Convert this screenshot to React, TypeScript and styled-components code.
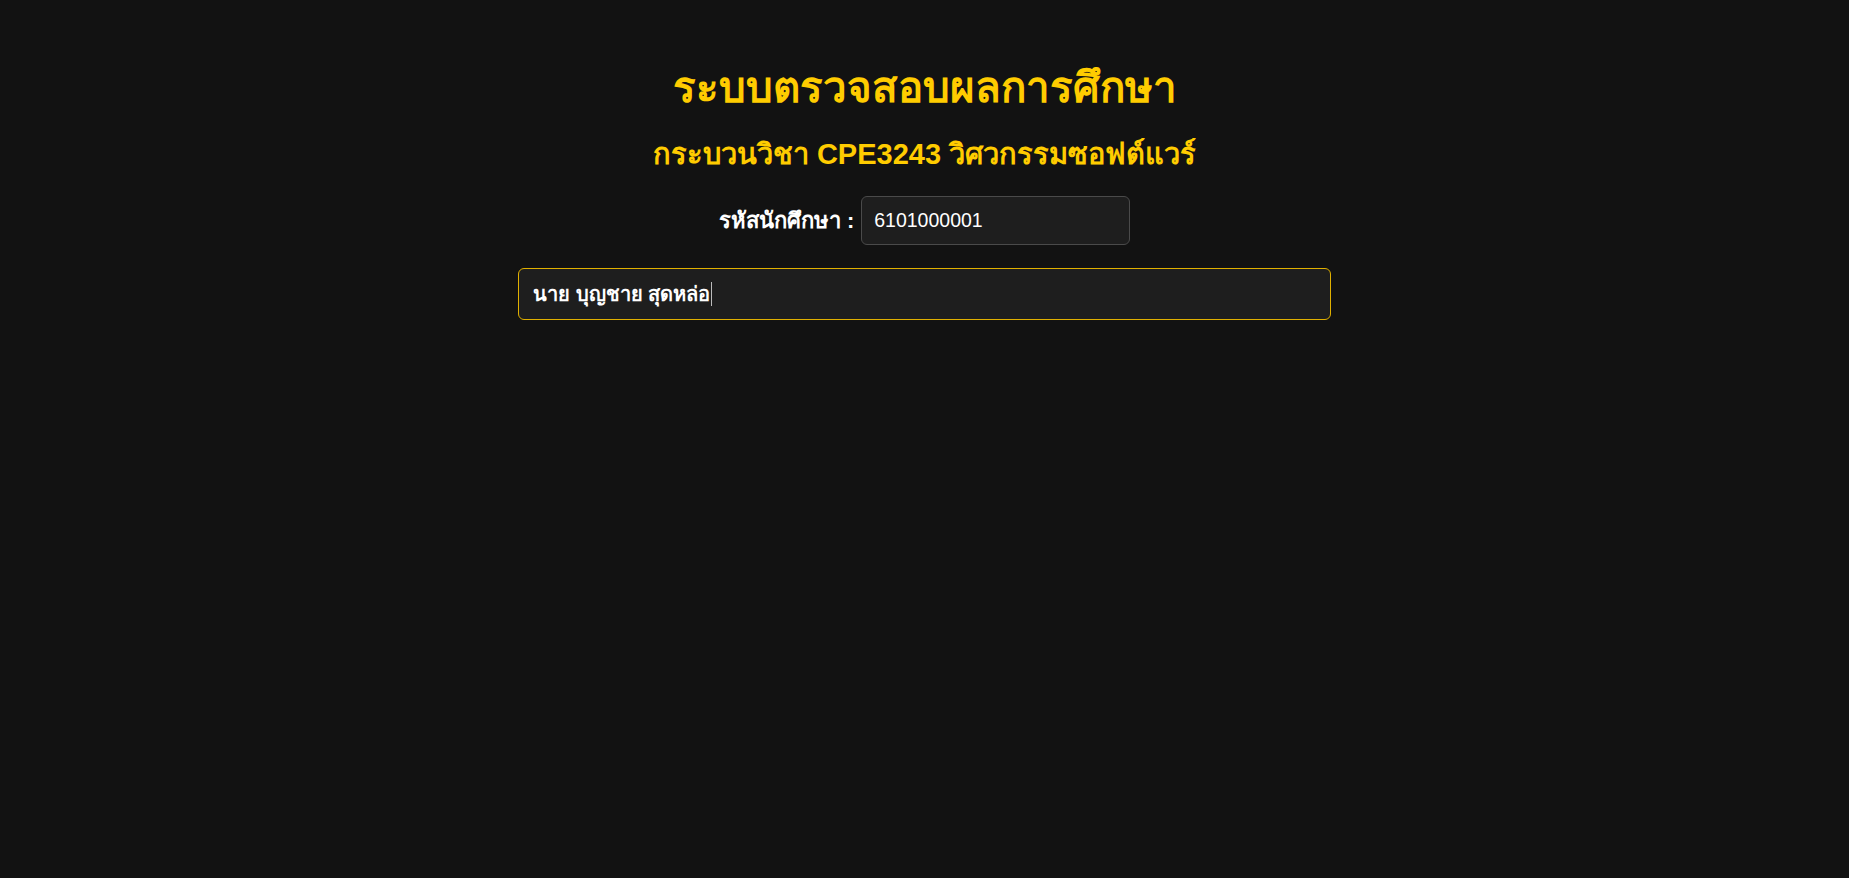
import styled, { createGlobalStyle } from "styled-components";

const GlobalStyle = createGlobalStyle`
  html, body {
    margin: 0;
    padding: 0;
    background: #121212;
    color: #ffffff;
    font-family: "Liberation Sans", Arial, "Noto Sans", sans-serif;
  }
`;

const Page = styled.main`
  display: flex;
  flex-direction: column;
  align-items: center;
  padding-top: 62px;
  min-height: 100vh;
  box-sizing: border-box;
`;

const Title = styled.h1`
  margin: 0;
  font-size: 42px;
  font-weight: 700;
  color: #ffcc00;
  line-height: 52px;
`;

const Subtitle = styled.h2`
  margin: 20px 0 0;
  font-size: 29px;
  font-weight: 700;
  color: #ffcc00;
  line-height: 40px;
`;

const Row = styled.div`
  display: flex;
  align-items: center;
  gap: 7px;
  margin-top: 22px;
`;

const Label = styled.label`
  font-size: 22px;
  font-weight: 700;
  color: #ffffff;
`;

const IdInput = styled.input`
  box-sizing: border-box;
  width: 269px;
  height: 49px;
  padding: 0 12px;
  background: #1e1e1e;
  border: 1px solid #4a4a4a;
  border-radius: 6px;
  color: #ffffff;
  font-family: inherit;
  font-size: 19.5px;
  outline: none;
`;

const NameBox = styled.div<{ $active?: boolean }>`
  box-sizing: border-box;
  width: 813px;
  height: 52px;
  margin-top: 23px;
  padding: 0 14px;
  display: flex;
  align-items: center;
  background: #1e1e1e;
  border: 1.5px solid ${(p) => (p.$active ? "#e0b000" : "#4a4a4a")};
  border-radius: 6px;
  font-size: 20px;
  font-weight: 700;
  color: #ffffff;
`;

const Caret = styled.span`
  display: inline-block;
  width: 1px;
  height: 24px;
  background: #bbbbbb;
  margin-left: 1px;
`;

export default function App() {
  return (
    <>
      <GlobalStyle />
      <Page>
        <Title>ระบบตรวจสอบผลการศึกษา</Title>
        <Subtitle>กระบวนวิชา CPE3243 วิศวกรรมซอฟต์แวร์</Subtitle>
        <Row>
          <Label htmlFor="sid">รหัสนักศึกษา :</Label>
          <IdInput id="sid" defaultValue="6101000001" />
        </Row>
        <NameBox $active>
          นาย บุญชาย สุดหล่อ
          <Caret />
        </NameBox>
      </Page>
    </>
  );
}
